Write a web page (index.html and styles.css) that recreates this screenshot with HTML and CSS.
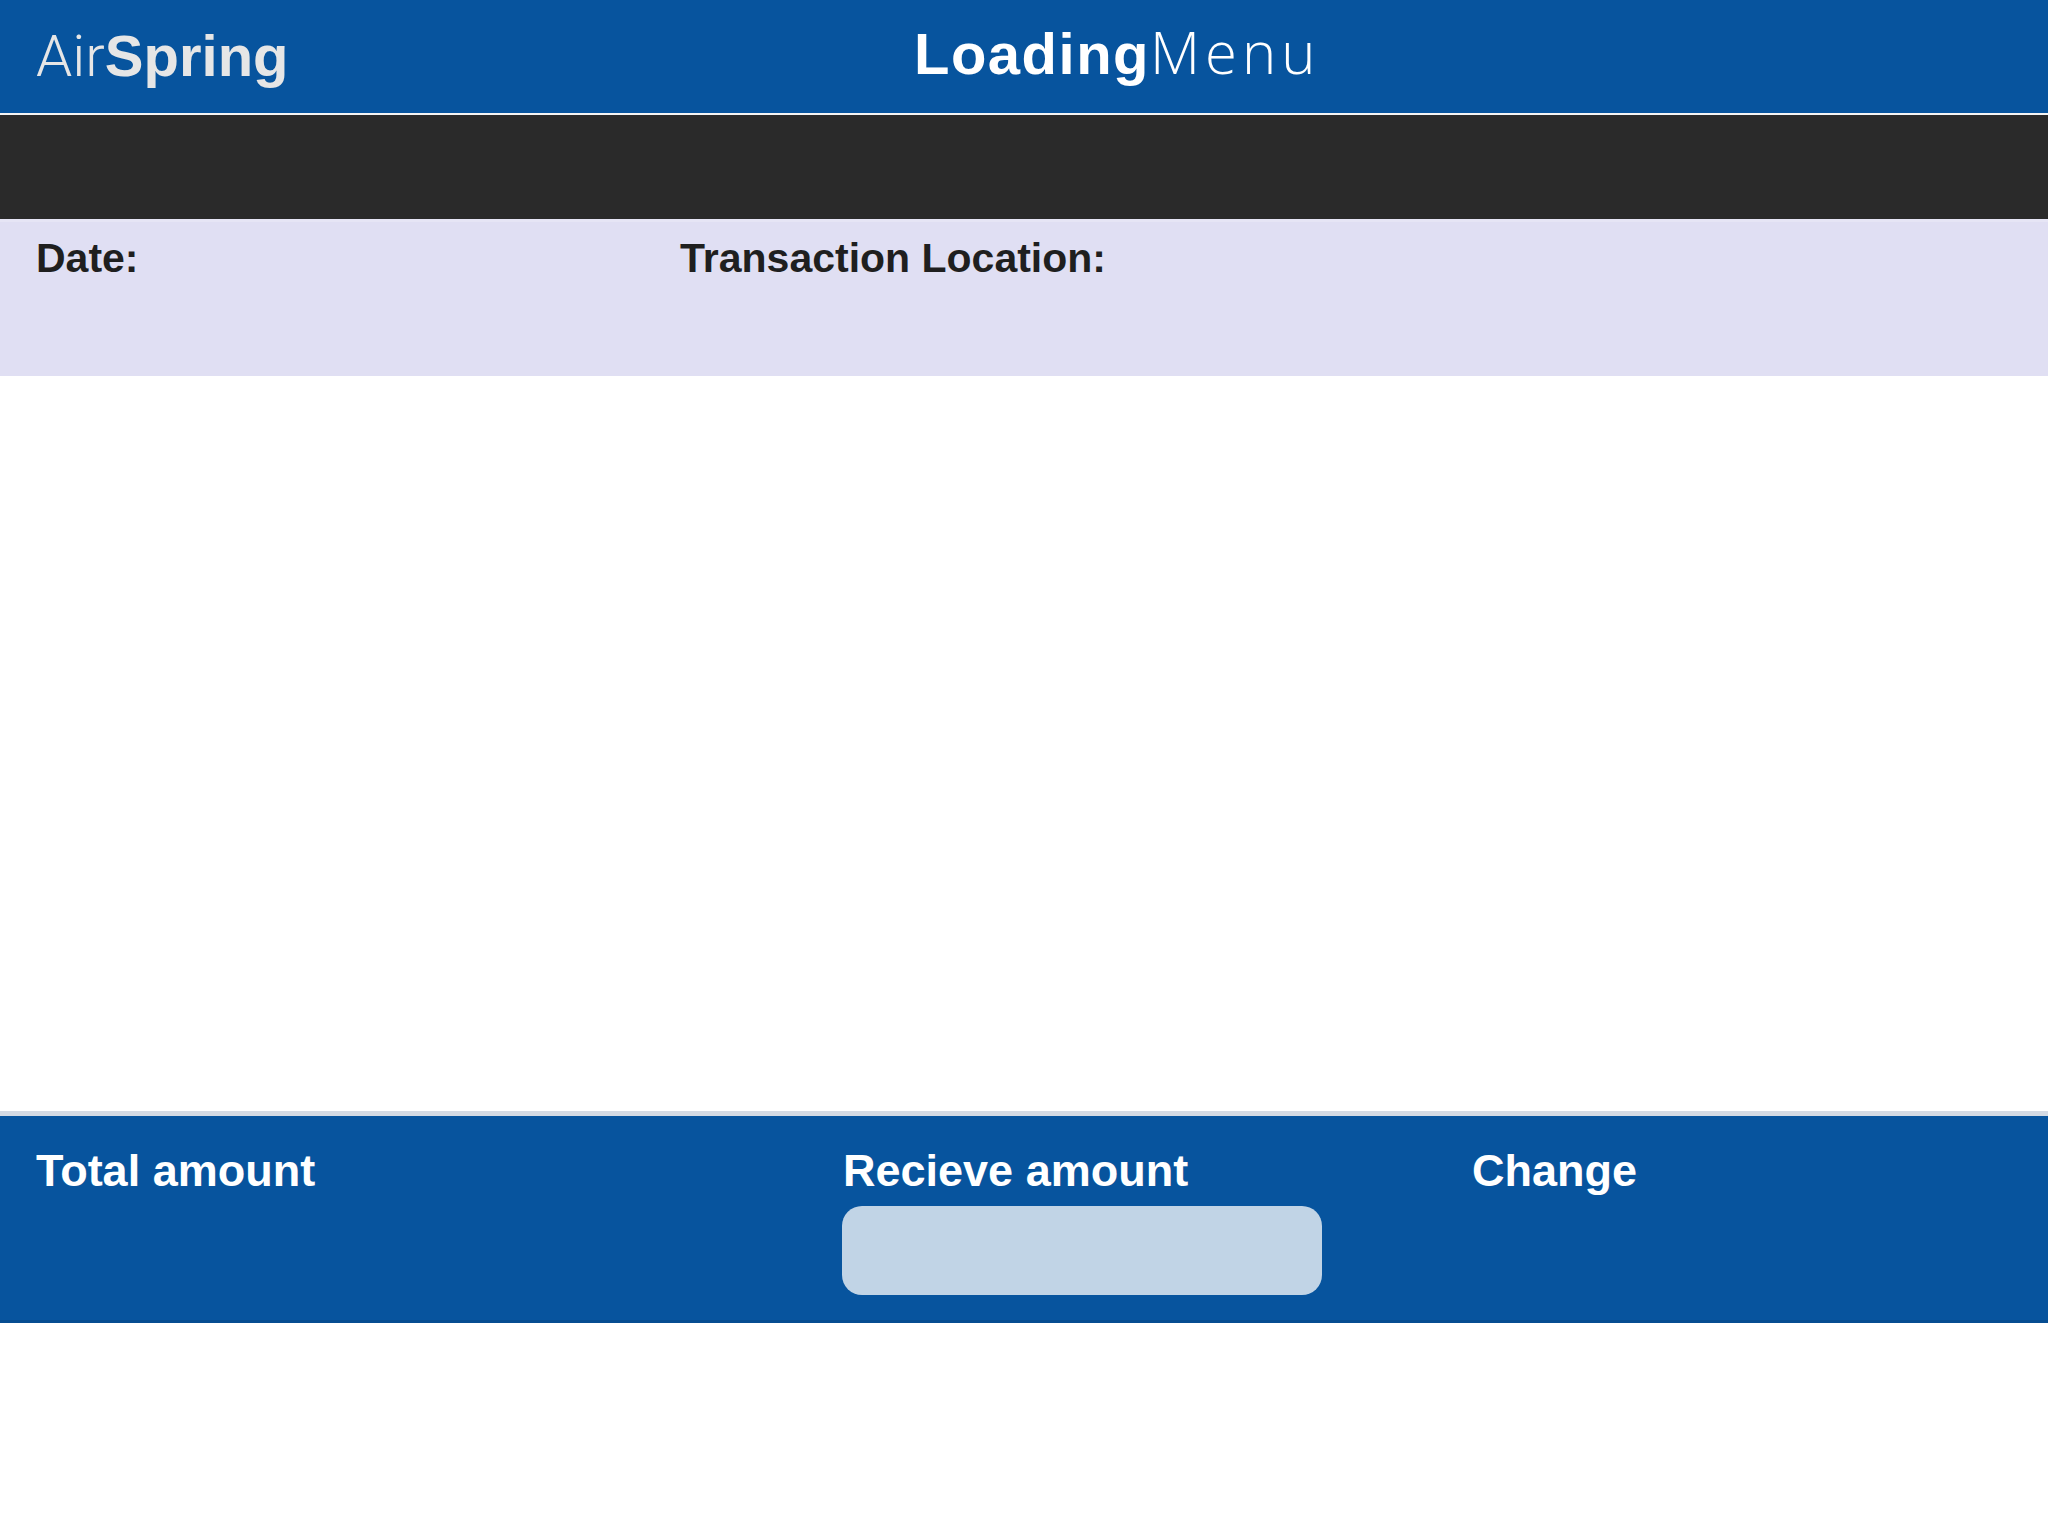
FILE: index.html
```html
<!DOCTYPE html>
<html lang="en">
<head>
<meta charset="utf-8">
<title>AirSpring - LoadingMenu</title>
<link rel="stylesheet" href="styles.css">
</head>
<body>
<div class="app">
  <header class="topbar">
    <div class="logo"><span class="light">Air</span><span class="bold">Spring</span></div>
    <div class="title"><span class="bold">Loading</span><span class="light wide">Menu</span></div>
  </header>
  <div class="toolbar"></div>
  <section class="info">
    <div class="info-col date">Date:</div>
    <div class="info-col location">Transaction Location:</div>
  </section>
  <main class="content"></main>
  <footer class="totals">
    <div class="total-col">
      <div class="label">Total amount</div>
    </div>
    <div class="total-col">
      <div class="label">Recieve amount</div>
      <div class="amount-input"></div>
    </div>
    <div class="total-col">
      <div class="label">Change</div>
    </div>
  </footer>
</div>
</body>
</html>
```

FILE: styles.css
```css
html, body {
  margin: 0;
  padding: 0;
  background: #ffffff;
}

body {
  font-family: "Liberation Sans", Arial, sans-serif;
  width: 2048px;
  height: 1536px;
}

.app {
  display: flex;
  flex-direction: column;
}

.topbar {
  height: 113px;
  background: #07549e;
  display: grid;
  grid-template-columns: 878px auto;
  padding-left: 36px;
  border-bottom: 2px solid #f4f4f4;
  box-sizing: content-box;
}

.logo {
  font-size: 58px;
  line-height: 1;
  padding-top: 27px;
  color: #e6e6e6;
  white-space: nowrap;
}

.title {
  font-size: 58px;
  line-height: 1;
  padding-top: 23px;
  color: #ffffff;
  white-space: nowrap;
}

.light {
  font-family: Roboto, "Liberation Sans", sans-serif;
  font-weight: 300;
}

.title .bold {
  letter-spacing: 1.5px;
}

.title .wide {
  font-family: "Open Sans", Roboto, sans-serif;
  font-weight: 300;
  letter-spacing: 5px;
}

.bold {
  font-family: "Liberation Sans", Arial, sans-serif;
  font-weight: 700;
}

.toolbar {
  height: 104px;
  background: #2a2a2a;
}

.info {
  height: 157px;
  box-sizing: border-box;
  background: #e0dff3;
  border-top: 3px solid #e6e5f5;
  display: grid;
  grid-template-columns: 644px 1fr;
  padding: 16px 0 0 36px;
}

.info-col {
  font-size: 41px;
  line-height: 1;
  font-weight: 700;
  color: #1f1f1f;
}

.content {
  height: 735px;
  background: #ffffff;
}

.totals {
  height: 212px;
  box-sizing: border-box;
  background: #07549e;
  border-top: 5px solid #d3dae4;
  border-bottom: 3px solid #064d91;
  display: grid;
  grid-template-columns: 807px 629px 1fr;
  padding: 32px 0 0 35px;
}

.total-col {
  display: flex;
  flex-direction: column;
  gap: 13px;
}

.label {
  font-size: 45px;
  line-height: 1;
  font-weight: 700;
  color: #ffffff;
  white-space: nowrap;
  padding-left: 1px;
}

.amount-input {
  width: 480px;
  height: 89px;
  border-radius: 20px;
  background: #c1d4e6;
}
```
